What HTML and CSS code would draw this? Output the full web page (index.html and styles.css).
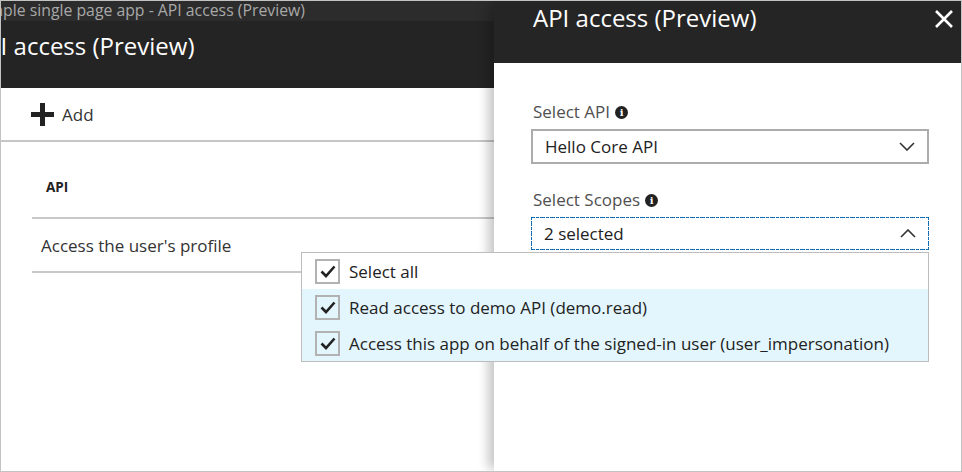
FILE: index.html
```html
<!DOCTYPE html>
<html>
<head>
<meta charset="utf-8">
<link rel="stylesheet" href="styles.css">
</head>
<body>
<div class="frame">
  <section class="blade-left">
    <div class="crumb"><span class="crumb-text">Sample single page app - API access (Preview)</span></div>
    <div class="left-header"><h1 class="left-title">API access (Preview)</h1></div>
    <div class="toolbar">
      <span class="add-btn">
        <svg class="plus" width="23" height="23" viewBox="0 0 23 23"><path d="M9 0h5v9h9v5h-9v9H9v-9H0V9h9z" fill="#222"/></svg>
        <span>Add</span>
      </span>
    </div>
    <div class="grid">
      <div class="grid-head">API</div>
      <div class="grid-row">Access the user's profile</div>
    </div>
  </section>
  <section class="blade-right">
    <div class="right-header">
      <h2 class="right-title">API access (Preview)</h2>
      <svg class="close" width="20" height="20" viewBox="0 0 20 20"><path d="M2 2L18 18M18 2L2 18" stroke="#fff" stroke-width="2.6" fill="none"/></svg>
    </div>
    <div class="right-body">
      <label class="field-label">Select API <span class="info">i</span></label>
      <div class="select">
        <span>Hello Core API</span>
        <svg class="chev" width="16" height="9" viewBox="0 0 16 9"><path d="M1 1l7 7 7-7" stroke="#333" stroke-width="1.6" fill="none"/></svg>
      </div>
      <label class="field-label second">Select Scopes <span class="info">i</span></label>
      <div class="scope-wrap">
        <div class="select focused">
          <span>2 selected</span>
          <svg class="chev" width="16" height="9" viewBox="0 0 16 9"><path d="M1 8l7-7 7 7" stroke="#333" stroke-width="1.6" fill="none"/></svg>
        </div>
        <ul class="menu">
          <li class="opt"><span class="cb"><svg width="16" height="13" viewBox="0 0 16 13"><path d="M1.5 6.5l4.5 4.5 8.5-9.5" stroke="#222" stroke-width="2.6" fill="none"/></svg></span>Select all</li>
          <li class="opt sel"><span class="cb"><svg width="16" height="13" viewBox="0 0 16 13"><path d="M1.5 6.5l4.5 4.5 8.5-9.5" stroke="#222" stroke-width="2.6" fill="none"/></svg></span>Read access to demo API (demo.read)</li>
          <li class="opt sel"><span class="cb"><svg width="16" height="13" viewBox="0 0 16 13"><path d="M1.5 6.5l4.5 4.5 8.5-9.5" stroke="#222" stroke-width="2.6" fill="none"/></svg></span>Access this app on behalf of the signed-in user (user_impersonation)</li>
        </ul>
      </div>
    </div>
  </section>
</div>
</body>
</html>
```
FILE: styles.css
```css
* { box-sizing: border-box; }
html, body { margin: 0; padding: 0; background: #fff; }
body { font-family: "Open Sans", "Noto Sans", sans-serif; }
.frame {
  width: 962px; height: 472px;
  border: 1px solid #c3c3c3;
  display: flex;
  overflow: hidden;
}
.blade-left { width: 493px; flex: none; display: flex; flex-direction: column; }
.crumb { height: 20px; background: #2c2c2c; overflow: hidden; white-space: nowrap; }
.crumb-text { display: block; margin-left: -30px; color: #a8a8a8; font-size: 15.8px; line-height: 18px; }
.left-header { height: 67px; background: #242424; overflow: hidden; white-space: nowrap; }
.left-title { margin: 0 0 0 -30px; padding-top: 10px; color: #fff; font-weight: 400; font-size: 24px; line-height: 30px; }
.toolbar { height: 54px; border-bottom: 2px solid #c6c6c6; display: flex; align-items: center; padding-left: 30px; }
.add-btn { display: flex; align-items: center; gap: 8px; font-size: 17px; color: #333; }
.grid { padding-left: 31px; }
.grid-head { height: 77px; border-bottom: 2px solid #c8c8c8; display: flex; align-items: center; padding: 14px 0 0 14px; font-size: 13.5px; font-weight: 700; color: #222; }
.grid-row { height: 54px; border-bottom: 2px solid #c8c8c8; display: flex; align-items: center; padding-left: 9px; font-size: 17px; color: #333; }
.blade-right { flex: 1; display: flex; flex-direction: column; box-shadow: -8px 0 10px -2px rgba(0,0,0,0.22); position: relative; }
.right-header { height: 62px; background: #252525; display: flex; justify-content: space-between; align-items: flex-start; padding: 2px 7px 0 39px; }
.right-title { margin: 0; color: #fff; font-weight: 400; font-size: 24px; line-height: 30px; }
.close { margin-top: 6px; }
.right-body { padding: 38px 32px 0 37px; display: flex; flex-direction: column; }
.field-label { font-size: 17px; color: #505050; line-height: 22px; display: flex; align-items: center; gap: 5px; padding-left: 2px; }
.field-label.second { margin-top: 25px; }
.info { width: 13px; height: 13px; border-radius: 50%; background: #222; color: #fff; font-size: 10px; font-weight: 700; line-height: 13px; text-align: center; font-family: "DejaVu Serif", serif; }
.select { margin-top: 6px; height: 35px; border: 2px solid #acacac; display: flex; align-items: center; justify-content: space-between; padding: 0 12px 0 12px; font-size: 17px; color: #222; }
.select.focused { height: 33px; border: 1px dashed #1a7fc9; outline: 1px dotted #0a5ea8; outline-offset: -1px; }
.scope-wrap { position: relative; }
.menu {
  position: absolute; top: 100%; right: 0; margin: 2px 0 0; padding: 0;
  width: 628px; list-style: none; background: #fff; border: 1px solid #bdbdbd;
  z-index: 5;
}
.opt { height: 36px; display: flex; align-items: center; gap: 9px; padding-left: 13px; font-size: 17px; color: #222; }
.opt.sel { background: #e3f6fd; }
.cb { width: 25px; height: 25px; border: 2px solid #b2b2b2; background: #fff; display: flex; align-items: center; justify-content: center; }
.opt.sel .cb { background: transparent; }
```
